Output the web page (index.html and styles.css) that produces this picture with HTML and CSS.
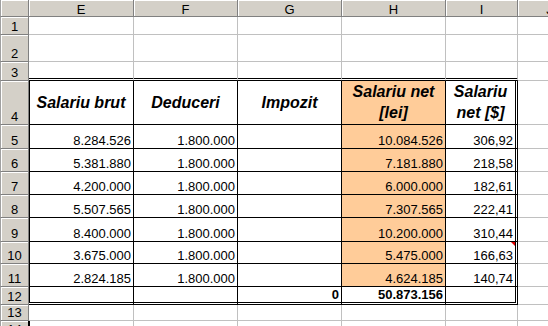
FILE: index.html
```html
<!DOCTYPE html>
<html>
<head>
<meta charset="utf-8">
<link rel="stylesheet" href="styles.css">
</head>
<body>
<div class="sheet">
  <!-- column headers -->
  <div class="c corner"></div>
  <div class="c ch">E</div>
  <div class="c ch">F</div>
  <div class="c ch">G</div>
  <div class="c ch">H</div>
  <div class="c ch">I</div>
  <div class="c ch">J</div>

  <!-- row 1 -->
  <div class="c rh">1</div>
  <div class="c"></div><div class="c"></div><div class="c"></div><div class="c"></div><div class="c"></div><div class="c"></div>
  <!-- row 2 -->
  <div class="c rh">2</div>
  <div class="c"></div><div class="c"></div><div class="c"></div><div class="c"></div><div class="c"></div><div class="c"></div>
  <!-- row 3 -->
  <div class="c rh">3</div>
  <div class="c top"></div><div class="c top"></div><div class="c top"></div><div class="c top"></div><div class="c top"></div><div class="c"></div>

  <!-- row 4 -->
  <div class="c rh">4</div>
  <div class="c t first hd">Salariu brut</div>
  <div class="c t hd">Deduceri</div>
  <div class="c t hd">Impozit</div>
  <div class="c t or hd">Salariu net [lei]</div>
  <div class="c t last hd">Salariu net [$]</div>
  <div class="c"></div>

  <!-- row 5 -->
  <div class="c rh">5</div>
  <div class="c t first num">8.284.526</div>
  <div class="c t num">1.800.000</div>
  <div class="c t num"></div>
  <div class="c t or num">10.084.526</div>
  <div class="c t last num">306,92</div>
  <div class="c"></div>

  <!-- row 6 -->
  <div class="c rh">6</div>
  <div class="c t first num">5.381.880</div>
  <div class="c t num">1.800.000</div>
  <div class="c t num"></div>
  <div class="c t or num">7.181.880</div>
  <div class="c t last num">218,58</div>
  <div class="c"></div>

  <!-- row 7 -->
  <div class="c rh">7</div>
  <div class="c t first num">4.200.000</div>
  <div class="c t num">1.800.000</div>
  <div class="c t num"></div>
  <div class="c t or num">6.000.000</div>
  <div class="c t last num">182,61</div>
  <div class="c"></div>

  <!-- row 8 -->
  <div class="c rh">8</div>
  <div class="c t first num">5.507.565</div>
  <div class="c t num">1.800.000</div>
  <div class="c t num"></div>
  <div class="c t or num">7.307.565</div>
  <div class="c t last num">222,41</div>
  <div class="c"></div>

  <!-- row 9 -->
  <div class="c rh">9</div>
  <div class="c t first num">8.400.000</div>
  <div class="c t num">1.800.000</div>
  <div class="c t num"></div>
  <div class="c t or num">10.200.000</div>
  <div class="c t last num">310,44</div>
  <div class="c"></div>

  <!-- row 10 -->
  <div class="c rh">10</div>
  <div class="c t first num">3.675.000</div>
  <div class="c t num">1.800.000</div>
  <div class="c t num"></div>
  <div class="c t or num">5.475.000</div>
  <div class="c t last num note">166,63</div>
  <div class="c"></div>

  <!-- row 11 -->
  <div class="c rh">11</div>
  <div class="c t first num">2.824.185</div>
  <div class="c t num">1.800.000</div>
  <div class="c t num"></div>
  <div class="c t or num">4.624.185</div>
  <div class="c t last num">140,74</div>
  <div class="c"></div>

  <!-- row 12 -->
  <div class="c rh">12</div>
  <div class="c t first bot num"></div>
  <div class="c t bot num"></div>
  <div class="c t bot num b">0</div>
  <div class="c t bot num b">50.873.156</div>
  <div class="c t last bot num"></div>
  <div class="c"></div>

  <!-- row 13 -->
  <div class="c rh">13</div>
  <div class="c"></div><div class="c"></div><div class="c"></div><div class="c"></div><div class="c"></div><div class="c"></div>

  <!-- row 14 -->
  <div class="c rh sel-rh">14</div>
  <div class="c sel"></div><div class="c"></div><div class="c"></div><div class="c"></div><div class="c"></div><div class="c"></div>
</div>
</body>
</html>
```

FILE: styles.css
```css
html, body {
  margin: 0;
  padding: 0;
  background: #ffffff;
  overflow: hidden;
}

body {
  width: 548px;
  height: 326px;
  font-family: "Liberation Sans", Arial, sans-serif;
  font-size: 13px;
  color: #000;
}

.sheet {
  display: grid;
  grid-template-columns: 29px 105px 104px 104px 104px 72px 64px;
  grid-template-rows: 17px 18px 27px 19px 44px 24px 23px 23px 23px 24px 22px 23px 18px 16px 17px;
}

.c {
  box-sizing: border-box;
  border-right: 1px solid #c0c0c0;
  border-bottom: 1px solid #c0c0c0;
  background: #fff;
  display: flex;
  line-height: 15px;
  white-space: nowrap;
  overflow: hidden;
}

/* header cells */
.corner,
.ch,
.rh {
  background: #d4d0c8;
  border-right: 1px solid #808080;
  border-bottom: 1px solid #808080;
  box-shadow: inset 1px 1px 0 #ffffff;
}

.ch {
  justify-content: center;
  align-items: flex-start;
  padding-top: 2px;
}

.rh {
  justify-content: center;
  align-items: flex-end;
  border-left: 1px solid #a0a0a0;
}

.corner {
  border-left: 1px solid #a0a0a0;
}

/* table region */
.top {
  border-bottom: 3px double #000;
}

.t {
  border-right: 1px solid #000;
  border-bottom: 1px solid #000;
}

.t.first {
  box-shadow: inset 1px 0 0 #000;
}

.t.last {
  border-right: 3px double #000;
}

.t.bot {
  border-bottom: 3px double #000;
}

.or {
  background: #ffcc99;
}

.hd {
  justify-content: center;
  align-items: center;
  text-align: center;
  white-space: normal;
  font-size: 16px;
  font-weight: bold;
  font-style: italic;
  line-height: 21px;
  padding: 0 3px 1px;
}

.num {
  justify-content: flex-end;
  align-items: flex-end;
  padding-right: 2px;
}

.b {
  font-weight: bold;
}

.note {
  position: relative;
}

.note::after {
  content: "";
  position: absolute;
  top: 0;
  right: 0;
  width: 0;
  height: 0;
  border-top: 4px solid #e00000;
  border-left: 4px solid transparent;
}

.sel-rh {
  border-right-color: #000;
}

.sel {
  box-shadow: inset 1px 0 0 #000;
}
```
